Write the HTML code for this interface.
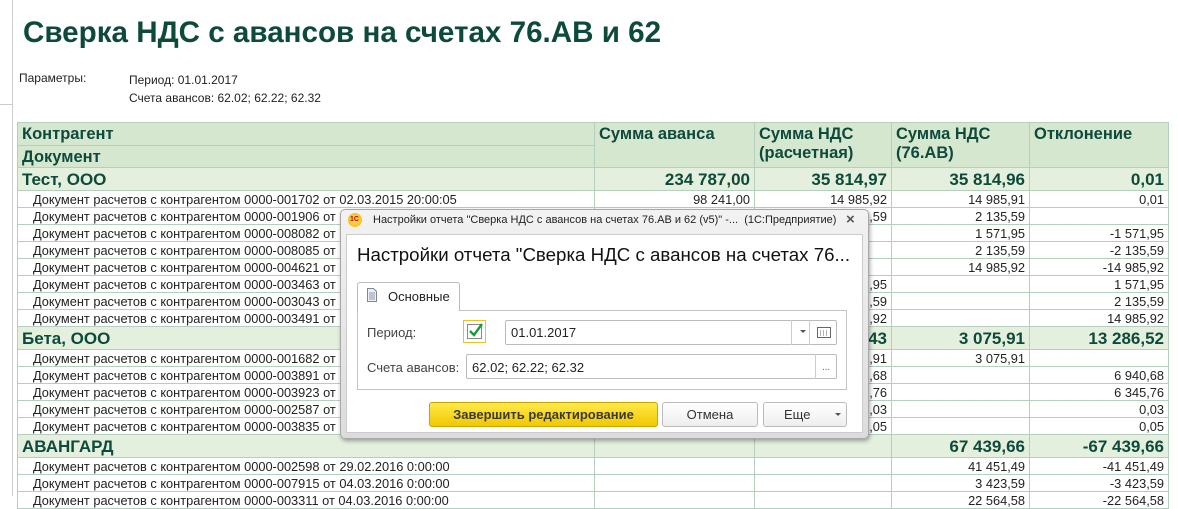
<!DOCTYPE html>
<html><head><meta charset="utf-8"><style>
*{margin:0;padding:0;box-sizing:border-box}
body{width:1178px;height:496px;overflow:hidden;background:#fff;font-family:"Liberation Sans",Arial,sans-serif;position:relative;color:#222}
.a{position:absolute}
table{position:absolute;left:17px;top:122px;border-collapse:collapse;table-layout:fixed;width:1151px}
td{border:1px solid #b4cfbd;font-size:12.8px;height:17px;padding:0 4px;white-space:nowrap;overflow:hidden;line-height:15px}
td.r{text-align:right}
.h td{background:#d6e7d0;color:#0e4a3b;font-weight:bold;font-size:16.5px;vertical-align:top;padding-top:2px;line-height:19px}
.g td{background:#e4f0dd;color:#0e4a3b;font-weight:bold;font-size:17px;height:23px}
.d td:first-child{padding-left:15px}
</style></head><body>
<div class="a" style="left:12px;top:0;width:1px;height:496px;background:#ccc"></div>
<div class="a" style="left:0;top:104px;width:12px;height:1px;background:#ccc"></div>
<div class="a" style="left:23px;top:16px;font-size:29.6px;font-weight:bold;color:#0e4a3b">Сверка НДС с авансов на счетах 76.АВ и 62</div>
<div class="a" style="left:19px;top:71px;font-size:12px">Параметры:</div>
<div class="a" style="left:129px;top:71px;font-size:12px;line-height:18px">Период: 01.01.2017<br>Счета авансов: 62.02; 62.22; 62.32</div>
<table>
<colgroup><col style="width:577px"><col style="width:160px"><col style="width:137px"><col style="width:138px"><col style="width:139px"></colgroup>
<tr class="h"><td style="height:23px">Контрагент</td><td rowspan="2">Сумма аванса</td><td rowspan="2">Сумма НДС<br>(расчетная)</td><td rowspan="2">Сумма НДС<br>(76.АВ)</td><td rowspan="2">Отклонение</td></tr>
<tr class="h"><td style="height:22px">Документ</td></tr>
<tr class="g"><td>Тест, ООО</td><td class="r">234 787,00</td><td class="r">35 814,97</td><td class="r">35 814,96</td><td class="r">0,01</td></tr>
<tr class="d"><td>Документ расчетов с контрагентом 0000-001702 от 02.03.2015 20:00:05</td><td class="r">98 241,00</td><td class="r">14 985,92</td><td class="r">14 985,91</td><td class="r">0,01</td></tr>
<tr class="d"><td>Документ расчетов с контрагентом 0000-001906 от</td><td></td><td class="r">2 135,59</td><td class="r">2 135,59</td><td></td></tr>
<tr class="d"><td>Документ расчетов с контрагентом 0000-008082 от</td><td></td><td></td><td class="r">1 571,95</td><td class="r">-1 571,95</td></tr>
<tr class="d"><td>Документ расчетов с контрагентом 0000-008085 от</td><td></td><td></td><td class="r">2 135,59</td><td class="r">-2 135,59</td></tr>
<tr class="d"><td>Документ расчетов с контрагентом 0000-004621 от</td><td></td><td></td><td class="r">14 985,92</td><td class="r">-14 985,92</td></tr>
<tr class="d"><td>Документ расчетов с контрагентом 0000-003463 от</td><td></td><td class="r">1 571,95</td><td></td><td class="r">1 571,95</td></tr>
<tr class="d"><td>Документ расчетов с контрагентом 0000-003043 от</td><td></td><td class="r">2 135,59</td><td></td><td class="r">2 135,59</td></tr>
<tr class="d"><td>Документ расчетов с контрагентом 0000-003491 от</td><td></td><td class="r">14 985,92</td><td></td><td class="r">14 985,92</td></tr>
<tr class="g"><td>Бета, ООО</td><td></td><td class="r">16 362,43</td><td class="r">3 075,91</td><td class="r">13 286,52</td></tr>
<tr class="d"><td>Документ расчетов с контрагентом 0000-001682 от</td><td></td><td class="r">3 075,91</td><td class="r">3 075,91</td><td></td></tr>
<tr class="d"><td>Документ расчетов с контрагентом 0000-003891 от</td><td></td><td class="r">6 940,68</td><td></td><td class="r">6 940,68</td></tr>
<tr class="d"><td>Документ расчетов с контрагентом 0000-003923 от</td><td></td><td class="r">6 345,76</td><td></td><td class="r">6 345,76</td></tr>
<tr class="d"><td>Документ расчетов с контрагентом 0000-002587 от</td><td></td><td class="r">0,03</td><td></td><td class="r">0,03</td></tr>
<tr class="d"><td>Документ расчетов с контрагентом 0000-003835 от</td><td></td><td class="r">0,05</td><td></td><td class="r">0,05</td></tr>
<tr class="g"><td>АВАНГАРД</td><td></td><td></td><td class="r">67 439,66</td><td class="r">-67 439,66</td></tr>
<tr class="d"><td>Документ расчетов с контрагентом 0000-002598 от 29.02.2016 0:00:00</td><td></td><td></td><td class="r">41 451,49</td><td class="r">-41 451,49</td></tr>
<tr class="d"><td>Документ расчетов с контрагентом 0000-007915 от 04.03.2016 0:00:00</td><td></td><td></td><td class="r">3 423,59</td><td class="r">-3 423,59</td></tr>
<tr class="d"><td>Документ расчетов с контрагентом 0000-003311 от 04.03.2016 0:00:00</td><td></td><td></td><td class="r">22 564,58</td><td class="r">-22 564,58</td></tr>
</table>

<div class="a" style="left:340px;top:209px;width:529px;height:230px;background:linear-gradient(#f2f2f2,#dcdcdc);border:1px solid #a8a8a8;border-radius:5px;box-shadow:1px 2px 4px rgba(0,0,0,.35)"></div>
<div class="a" style="left:348px;top:213px;width:14px;height:14px;border-radius:50%;background:radial-gradient(#ffe36b,#f2b200);"></div>
<div class="a" style="left:350px;top:216px;font-size:7px;font-weight:bold;color:#c00">1С</div>
<div class="a" style="left:373px;top:214px;font-size:11px;color:#222">Настройки отчета "Сверка НДС с авансов на счетах 76.АВ и 62 (v5)" -...&nbsp; (1С:Предприятие)</div>
<div class="a" style="left:846px;top:211px;font-size:15px;color:#555;font-weight:bold">×</div>
<div class="a" style="left:346px;top:234px;width:517px;height:199px;background:#fff;border:1px solid #ccc"></div>
<div class="a" style="left:357px;top:244px;font-size:18.7px;color:#111">Настройки отчета "Сверка НДС с авансов на счетах 76...</div>
<div class="a" style="left:357px;top:282px;width:103px;height:29px;background:#fff;border:1px solid #bbb;border-bottom:none;border-radius:3px 3px 0 0;z-index:2"></div>
<svg class="a" style="left:366px;top:288px;z-index:3" width="12" height="14" viewBox="0 0 12 14"><path d="M1.5 .5h6l3 3v10h-9z" fill="#eef2f7" stroke="#7a8898"/><path d="M3 5h6M3 7h6M3 9h6M3 11h6" stroke="#8a97a8"/></svg>
<div class="a" style="left:388px;top:289px;font-size:13px;color:#222;z-index:3">Основные</div>
<div class="a" style="left:357px;top:310px;width:490px;height:80px;border:1px solid #c4c4c4"></div>
<div class="a" style="left:367px;top:325px;font-size:13px;color:#444">Период:</div>
<div class="a" style="left:463px;top:320px;width:23px;height:23px;border:1px solid #f0c020"></div>
<div class="a" style="left:467px;top:324px;width:15px;height:15px;border:1px solid #888;background:#fff"></div>
<svg class="a" style="left:468px;top:322px" width="16" height="16" viewBox="0 0 16 16"><path d="M2 9l4 4 8-11" fill="none" stroke="#1a9a3a" stroke-width="2.4"/></svg>
<div class="a" style="left:505px;top:320px;width:332px;height:25px;border:1px solid #bbb;border-radius:2px"></div>
<div class="a" style="left:791px;top:320px;width:1px;height:25px;background:#ccc"></div>
<div class="a" style="left:809px;top:320px;width:1px;height:25px;background:#ccc"></div>
<div class="a" style="left:800px;top:330px;width:0;height:0;border:3px solid transparent;border-top:3px solid #555"></div>
<svg class="a" style="left:817px;top:327px" width="14" height="11" viewBox="0 0 14 11"><rect x=".5" y=".5" width="13" height="10" fill="#fff" stroke="#666"/><path d="M3 4h1M6 4h1M9 4h1M3 6h1M6 6h1M9 6h1M3 8h1M6 8h1M9 8h1" stroke="#666"/></svg>
<div class="a" style="left:511px;top:325px;font-size:13px;color:#222">01.01.2017</div>
<div class="a" style="left:367px;top:360px;font-size:13px;color:#444">Счета авансов:</div>
<div class="a" style="left:466px;top:354px;width:371px;height:25px;border:1px solid #bbb;border-radius:2px"></div>
<div class="a" style="left:815px;top:354px;width:1px;height:25px;background:#ccc"></div>
<div class="a" style="left:822px;top:362px;font-size:10px;color:#666">...</div>
<div class="a" style="left:472px;top:360px;font-size:13px;color:#222">62.02; 62.22; 62.32</div>
<div class="a" style="left:429px;top:402px;width:229px;height:25px;background:linear-gradient(#ffe94a,#f1c800);border:1px solid #c9a600;border-radius:3px;font-size:13px;font-weight:bold;color:#3a3a3a;text-align:center;line-height:23px">Завершить редактирование</div>
<div class="a" style="left:662px;top:402px;width:96px;height:25px;background:linear-gradient(#fff,#eee);border:1px solid #bbb;border-radius:3px;font-size:13px;color:#333;text-align:center;line-height:23px">Отмена</div>
<div class="a" style="left:763px;top:402px;width:84px;height:25px;background:linear-gradient(#fff,#eee);border:1px solid #bbb;border-radius:3px;font-size:13px;color:#333;line-height:23px;padding-left:20px">Еще</div>
<div class="a" style="left:835px;top:413px;width:0;height:0;border:3px solid transparent;border-top:3px solid #555"></div>
</body></html>
